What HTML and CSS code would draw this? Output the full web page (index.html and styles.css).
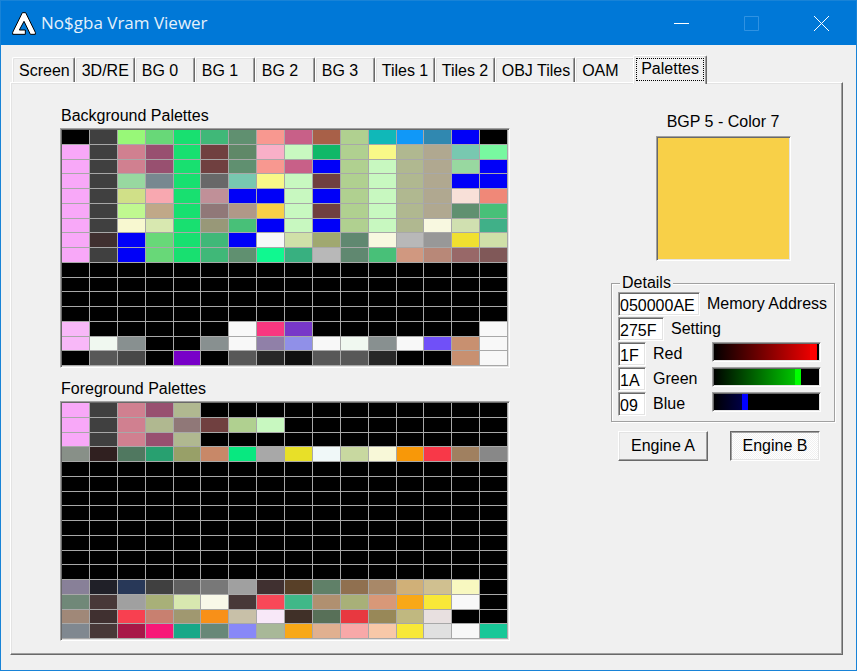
FILE: index.html
```html
<!DOCTYPE html>
<html lang="en">
<head>
<meta charset="utf-8">
<title>No$gba Vram Viewer</title>
<link rel="stylesheet" href="styles.css">
</head>
<body>
<div class="window">
  <header class="titlebar">
    <svg class="logo" viewBox="0 0 72 69" aria-hidden="true">
      <path d="M31 2H41L70 61V67H55L36 28L22 54H40V67H2V61Z" fill="#fff" stroke="#000" stroke-width="3"/>
    </svg>
    <h1 class="title">No$gba Vram Viewer</h1>
    <button class="caption" type="button" aria-label="Minimize"><svg viewBox="0 0 15 15"><path d="M0 7.5H15"/></svg></button>
    <button class="caption" type="button" aria-label="Maximize" disabled><svg viewBox="0 0 15 15"><path d="M.5 .5H14.500V14.500H.5Z"/></svg></button>
    <button class="caption" type="button" aria-label="Close"><svg viewBox="0 0 15 15"><path d="M0 0L15 15M15 0L0 15"/></svg></button>
  </header>
  <main class="client">
    <nav class="tabs" role="tablist">
      <button class="tab" type="button" role="tab">Screen</button>
      <button class="tab" type="button" role="tab">3D/RE</button>
      <button class="tab" type="button" role="tab">BG 0</button>
      <button class="tab" type="button" role="tab">BG 1</button>
      <button class="tab" type="button" role="tab">BG 2</button>
      <button class="tab" type="button" role="tab">BG 3</button>
      <button class="tab" type="button" role="tab">Tiles 1</button>
      <button class="tab" type="button" role="tab">Tiles 2</button>
      <button class="tab" type="button" role="tab">OBJ Tiles</button>
      <button class="tab" type="button" role="tab">OAM</button>
      <button class="tab selected" type="button" role="tab" aria-selected="true">Palettes</button>
    </nav>
    <div class="panel">
      <div class="palettes">
        <h2 class="caption-text">Background Palettes</h2>
        <div class="palette sunken" id="background"></div>
        <h2 class="caption-text">Foreground Palettes</h2>
        <div class="palette sunken" id="foreground"></div>
      </div>
      <div class="side">
        <p class="color-name">BGP 5 - Color 7</p>
        <div class="swatch sunken"></div>
        <fieldset class="details">
          <legend>Details</legend>
          <div class="row">
            <input class="field sunken wide" id="address" value="050000AE">
            <label for="address">Memory Address</label>
          </div>
          <div class="row">
            <input class="field sunken medium" id="setting" value="275F">
            <label for="setting">Setting</label>
          </div>
          <div class="row">
            <input class="field sunken" id="red" value="1F">
            <label for="red">Red</label>
            <input class="level sunken red" type="range" min="0" max="31" value="31" aria-label="Red level">
          </div>
          <div class="row">
            <input class="field sunken" id="green" value="1A">
            <label for="green">Green</label>
            <input class="level sunken green" type="range" min="0" max="31" value="26" aria-label="Green level">
          </div>
          <div class="row">
            <input class="field sunken" id="blue" value="09">
            <label for="blue">Blue</label>
            <input class="level sunken blue" type="range" min="0" max="31" value="9" aria-label="Blue level">
          </div>
        </fieldset>
        <div class="engines">
          <button class="engine" type="button">Engine A</button>
          <button class="engine pressed" type="button" aria-pressed="true">Engine B</button>
        </div>
      </div>
    </div>
  </main>
</div>
<script src="app.js"></script>
</body>
</html>
```
FILE: styles.css
```css
* {
  box-sizing: border-box;
}

body {
  margin: 0;
  font: 16px/18px "Liberation Sans", Arial, sans-serif;
  color: #000;
}

button,
input {
  margin: 0;
  font: inherit;
  color: inherit;
  border-radius: 0;
}

.window {
  display: flex;
  flex-direction: column;
  min-height: 100vh;
  border: 1px solid #1883d7;
  background: #f0f0f0;
}

.titlebar {
  display: flex;
  align-items: center;
  height: 44px;
  padding-left: 11px;
  background: #0078d7;
}

.logo {
  width: 24px;
  height: 23px;
}

.title {
  flex: 1;
  margin: 0 0 0 5px;
  font: 17px/24px "Open Sans", "Noto Sans", sans-serif;
  color: #e5f1fb;
  white-space: nowrap;
}

.caption {
  display: flex;
  align-items: center;
  justify-content: center;
  width: 70px;
  height: 44px;
  padding: 0;
  border: 0;
  background: none;
}

.caption svg {
  width: 15px;
  height: 15px;
  fill: none;
  stroke: #fff;
}

.caption:disabled svg {
  stroke: #2f92e2;
}

.client {
  flex: 1;
  display: flex;
  flex-direction: column;
  padding: 10px 13px 15px 9px;
}

.tabs {
  display: flex;
  align-items: flex-end;
  padding-left: 2px;
}

.tab {
  min-width: 60px;
  height: 25px;
  padding: 2px 4px 0 6px;
  border: 1px solid #fff;
  border-right: 1px solid #696969;
  border-bottom: 0;
  border-radius: 2px 2px 0 0;
  background: #f0f0f0;
  box-shadow: inset -1px 0 #a0a0a0, inset 1px 1px #e3e3e3;
  text-align: left;
  white-space: nowrap;
}

.tab.selected {
  position: relative;
  height: 29px;
  margin: 0 -2px -2px;
  padding: 0 7px 3px;
  outline: 1px dotted #000;
  outline-offset: -4px;
}

.panel {
  flex: 1;
  display: grid;
  grid-template-columns: minmax(0, 1fr) 224px;
  gap: 101px;
  padding: 23px 7px 12px 49px;
  border: 1px solid;
  border-color: #fff #696969 #696969 #fff;
  box-shadow: inset -1px -1px #a0a0a0, inset 1px 1px #e3e3e3;
}

.sunken {
  border: 1px solid;
  border-color: #a0a0a0 #fff #fff #a0a0a0;
  box-shadow: inset 1px 1px #696969, inset -1px -1px #e3e3e3;
}

.palettes {
  display: flex;
  flex-direction: column;
  padding: 1px 0;
}

.caption-text {
  margin: 0 0 3px 1px;
  font: inherit;
}

.palette {
  flex: 1;
  display: grid;
  grid-template: repeat(16, minmax(0, 1fr)) / repeat(16, minmax(0, 1fr));
  min-height: 160px;
  padding: 1px;
}

.palette + .caption-text {
  margin-top: 12px;
}

.cell {
  border: solid #a8a8a8;
  border-width: 0 1px 1px 0;
}

.side {
  padding: 6px 0;
}

.color-name {
  margin: 0 0 4px;
  line-height: 20px;
  text-align: center;
}

.swatch {
  width: 135px;
  height: 125px;
  margin: 0 auto 13px;
  background: #f8d048;
}

.details {
  margin: 0;
  padding: 0 6px 4px;
  border: 1px solid #a0a0a0;
  box-shadow: 1px 1px #fff, inset 1px 1px #fff;
}

.details legend {
  margin-left: 2px;
  padding: 0 2px;
  background: #f0f0f0;
}

.row {
  display: flex;
  align-items: flex-start;
  gap: 7px;
  margin-bottom: 1px;
}

.row label {
  flex: 1;
  line-height: 24px;
  white-space: nowrap;
}

.field {
  width: 28px;
  height: 24px;
  padding: 3px 1px 0;
  background: #fff;
}

.field.medium {
  width: 46px;
}

.field.wide {
  width: 82px;
}

.level {
  -webkit-appearance: none;
  appearance: none;
  width: 109px;
  height: 20px;
  margin-right: 7px;
  padding: 1px 4px 1px 1px;
  background:
    linear-gradient(to right, transparent var(--level), #000 0),
    linear-gradient(to right, #000, var(--channel));
}

.level::-webkit-slider-thumb {
  -webkit-appearance: none;
  width: 6px;
  height: 16px;
  background: var(--channel);
}

.red {
  --channel: #f00;
}

.green {
  --channel: #0f0;
}

.blue {
  --channel: #00f;
}

.engines {
  display: flex;
  gap: 22px;
  padding: 9px 7px;
}

.engine {
  width: 90px;
  height: 30px;
  padding: 0;
  border: 1px solid;
  border-color: #fff #696969 #696969 #fff;
  background: #f0f0f0;
  box-shadow: inset -1px -1px #a0a0a0, inset 1px 1px #e3e3e3;
}

.engine.pressed {
  border-color: #696969 #fff #fff #696969;
  background: repeating-conic-gradient(#f0f0f0 0 25%, #fff 0 50%) 0 0 / 2px 2px;
  box-shadow: inset 1px 1px #a0a0a0, inset -1px -1px #e3e3e3;
}
```
FILE: app.js
```js
// One line per 16-colour palette; "-" is an empty (black) entry.
const BLANK = Array(16).fill("-").join(" ");

const background = [
  "- 404040 98f878 68d878 18e070 40b878 609070 f89890 c86088 a86048 b0d090 10b8b8 1098f8 3088b0 0000f8 -",
  "f8a8f8 404040 d08090 985070 18e070 704040 608868 f8b0c8 c8f8c0 10b868 b0d090 f8f888 b0b890 b0a890 78c8b0 78f8a0",
  "f8a8f8 404040 d08090 985070 18e070 704040 609070 f89890 c86088 0000f8 b0d090 c8f8c0 b0b890 b0a890 98d8a0 0000f8",
  "f8a8f8 404040 98d8a0 788890 18e070 686868 78c8b0 f8f888 c8f8c0 704040 b0d090 c8f8c0 b0b890 b0a890 0000f8 0000f8",
  "f8a8f8 404040 d0e088 f8a8b0 18e070 c09098 0000f8 0000f8 c8f8c0 0000f8 b0d090 c8f8c0 b0b890 b0a890 f8e0d8 f08878",
  "f8a8f8 404040 c0f890 c0a888 18e070 907878 b09888 f8d048 c8f8c0 704040 b0d090 c8f8c0 b0b890 b0a890 609070 48c078",
  "f8a8f8 404040 f8f8d0 d8e8b0 18e070 989878 48c078 0000f8 c8f8c0 0000f8 b0d090 c8f8c0 b0b890 f8f8e0 d0e0b0 40b088",
  "f8a8f8 403030 0000f8 68d878 18e070 40b878 0000f8 f8f8f8 d0e0a8 a0a870 608870 f8f8e0 b8b8b8 989898 f0e030 d0e0a8",
  "f8a8f8 404040 0000f8 68d878 18e070 40b878 609070 10f890 38b080 b8b8b8 608870 48c078 d09880 b88878 986868 805858",
  BLANK, BLANK, BLANK, BLANK,
  "f8b8f8 - - - - - f8f8f8 f83880 7838c8 - - - - - - f8f8f8",
  "f8b8f8 f0f8f0 889090 - - 889090 f8f8f8 9080a8 9090e8 f8f8f8 f0f8f0 889090 f8f8f8 7050f8 c89070 f8f8f8",
  "- 585858 484848 - 7800c8 - 585858 282828 101010 585858 585858 282828 - - c89070 f8f8f8"
];

const foreground = [
  "f8a8f8 404040 d08090 985070 b0b890 - - - - - - - - - - -",
  "f8a8f8 404040 d08090 b0b890 907878 704040 b0d090 c8f8c0 - - - - - - - -",
  "f8a8f8 404040 d08090 985070 b0b890 - - - - - - - - - - -",
  "889088 302020 507860 28a070 98a068 c88868 08e880 a8a8a8 e8e028 f0f8f8 c8d8a0 f8f8d8 f89808 f83848 a08060 888888",
  BLANK, BLANK, BLANK, BLANK, BLANK, BLANK, BLANK, BLANK,
  "888098 202028 283858 404040 606060 787878 a0a0a0 403030 584028 608068 907050 a88868 d0b078 d0c090 f8f8c0 -",
  "708878 483838 a0a0a0 a8b078 d8e8b0 f8f8e8 483838 f84858 40b888 b09070 a8b078 d89878 f8a818 f8e838 f8f8f8 -",
  "a08878 403030 f84050 c88070 a09870 f89018 c8c0a8 f8e8f8 403028 587058 e83840 988858 c0b880 e8e0e0 - -",
  "808890 483838 a81848 f81878 18a888 688878 8888f8 a8b898 f8a818 e0b090 f8a8a8 f8c8a8 f8e838 e0e0e0 f8f8f8 18c898"
];

function draw(id, rows) {
  const grid = document.getElementById(id);
  for (const color of rows.join(" ").split(" ")) {
    const cell = document.createElement("div");
    cell.className = "cell";
    cell.style.backgroundColor = color === "-" ? "#000" : "#" + color;
    grid.append(cell);
  }
}

draw("background", background);
draw("foreground", foreground);

for (const level of document.querySelectorAll(".level")) {
  const update = () => level.style.setProperty("--level", (level.value / 31) * 94 + 3 + "%");
  level.addEventListener("input", update);
  update();
}
```
